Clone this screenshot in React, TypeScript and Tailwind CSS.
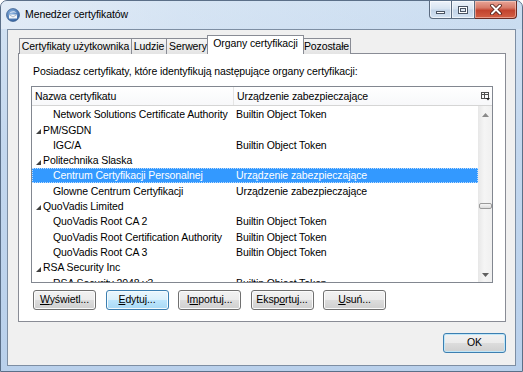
import React from "react";

type Row = { t: string; d?: string; lvl: 0 | 1; sel?: boolean };

const rows: Row[] = [
  { t: "Network Solutions Certificate Authority", d: "Builtin Object Token", lvl: 1 },
  { t: "PM/SGDN", lvl: 0 },
  { t: "IGC/A", d: "Builtin Object Token", lvl: 1 },
  { t: "Politechnika Slaska", lvl: 0 },
  { t: "Centrum Certyfikacji Personalnej", d: "Urządzenie zabezpieczające", lvl: 1, sel: true },
  { t: "Glowne Centrum Certyfikacji", d: "Urządzenie zabezpieczające", lvl: 1 },
  { t: "QuoVadis Limited", lvl: 0 },
  { t: "QuoVadis Root CA 2", d: "Builtin Object Token", lvl: 1 },
  { t: "QuoVadis Root Certification Authority", d: "Builtin Object Token", lvl: 1 },
  { t: "QuoVadis Root CA 3", d: "Builtin Object Token", lvl: 1 },
  { t: "RSA Security Inc", lvl: 0 },
  { t: "RSA Security 2048 v3", d: "Builtin Object Token", lvl: 1 },
];

const btnBase =
  "h-[20px] w-[63px] rounded-[3px] border flex items-center justify-center text-black";
const btnNormal =
  "border-[#707070] bg-[linear-gradient(#f2f2f2_0%,#ebebeb_50%,#dddddd_50%,#cfcfcf_100%)] shadow-[inset_0_0_0_1px_#fbfbfb]";
const btnHot =
  "border-[#3c7fb1] bg-[linear-gradient(#eaf6fd_0%,#d9f0fc_50%,#bee6fd_50%,#a7d9f5_100%)] shadow-[inset_0_0_0_1px_#f4fbfe]";

function Btn({ pre, u, post, hot }: { pre?: string; u: string; post: string; hot?: boolean }) {
  return (
    <div className={`${btnBase} ${hot ? btnHot : btnNormal}`}>
      <span>
        {pre}
        <span className="underline underline-offset-[1px]">{u}</span>
        {post}
      </span>
    </div>
  );
}

function Tri() {
  return (
    <svg width="5" height="5" viewBox="0 0 5 5" className="mr-[2px] mt-[2px]">
      <polygon points="5,0 5,5 0,5" fill="#404040" />
    </svg>
  );
}

function AppIcon() {
  return (
    <svg width="14" height="14" viewBox="0 0 14 14">
      <defs>
        <radialGradient id="g1" cx="0.4" cy="0.35" r="0.7">
          <stop offset="0" stopColor="#8fb6e2" />
          <stop offset="1" stopColor="#2f5f9e" />
        </radialGradient>
      </defs>
      <circle cx="7" cy="7" r="6.5" fill="url(#g1)" stroke="#2a4f80" strokeWidth="0.6" />
      <path d="M3 6.5 L11 6.5 L11 10.5 L3 10.5 Z" fill="#f4f6f8" />
      <path d="M3 6.5 L7 9 L11 6.5" fill="none" stroke="#8aa0bb" strokeWidth="0.7" />
      <path d="M3.5 5.5 C5 2.5 9 2.5 10.5 5 C8.5 4 6 4.2 3.5 5.5 Z" fill="#dfe8f2" />
    </svg>
  );
}

export default function App() {
  return (
    <div className="w-[523px] h-[372px] overflow-hidden font-['Liberation_Sans',Arial,sans-serif] text-[10.5px] tracking-[-0.1px] text-black">
      <div className="w-[523px] h-[372px] flex flex-col rounded-t-[7px] border border-[#5b6f88] bg-[linear-gradient(180deg,#d4e3f3_0%,#c3d7ee_40%,#b9d0eb_100%)]">
        {/* Title bar */}
        <div className="relative h-[28px] flex items-center pl-[5px] bg-[linear-gradient(90deg,rgba(236,242,249,0.6)_0%,rgba(220,232,245,0.3)_35%,rgba(170,200,232,0.2)_100%)] rounded-t-[6px]">
          <AppIcon />
          <span className="ml-[5px] text-[10.5px]">Menedżer certyfikatów</span>
          <div className="absolute right-[5px] top-0 flex h-[18px]">
            <div className="w-[23px] h-[18px] rounded-bl-[4px] border border-t-0 border-[#5b6b80] bg-[linear-gradient(#eef3fa_0%,#d8e4f1_45%,#c3d4e8_55%,#d3e2f3_100%)] shadow-[inset_0_0_0_1px_rgba(255,255,255,0.6)] flex items-end justify-center pb-[4px]">
              <div className="w-[9px] h-[3px] bg-white border border-[#4a5464]" />
            </div>
            <div className="w-[23px] h-[18px] border border-l-0 border-t-0 border-[#5b6b80] bg-[linear-gradient(#eef3fa_0%,#d8e4f1_45%,#c3d4e8_55%,#d3e2f3_100%)] shadow-[inset_0_0_0_1px_rgba(255,255,255,0.6)] flex items-center justify-center">
              <div className="w-[10px] h-[8px] border border-[#4a5464] bg-white flex items-center justify-center">
                <div className="w-[6px] h-[4px] border border-[#4a5464] bg-[#dfe8f3]" />
              </div>
            </div>
            <div className="w-[42px] h-[18px] rounded-br-[4px] border border-l-0 border-t-0 border-[#6b2a22] bg-[linear-gradient(#e8a597_0%,#d77a68_40%,#c2432e_55%,#d35f45_100%)] shadow-[inset_0_0_0_1px_rgba(255,220,210,0.5)] flex items-center justify-center">
              <svg width="14" height="11" viewBox="0 0 14 11">
                <path d="M3 1.5 L11 9.5 M11 1.5 L3 9.5" stroke="#4a1a14" strokeWidth="3.6" strokeLinecap="round" />
                <path d="M3 1.5 L11 9.5 M11 1.5 L3 9.5" stroke="#ffffff" strokeWidth="2" strokeLinecap="round" />
              </svg>
            </div>
          </div>
        </div>

        {/* Client area */}
        <div className="flex-1 ml-[6px] mr-[6px] mb-[5px] border border-[#7d8ea3] bg-[#f0f0f0] flex flex-col pt-[6px]">
          {/* Tabs */}
          <div className="relative z-10 flex items-end ml-[11px] h-[18px] -mb-[1px]">
            <div className="w-[113px] h-[16px] border border-b-0 border-[#898c95] bg-[linear-gradient(#f5f5f5,#e4e4e4)] flex items-center justify-center">
              Certyfikaty użytkownika
            </div>
            <div className="-ml-[1px] w-[36px] h-[16px] border border-b-0 border-[#898c95] bg-[linear-gradient(#f5f5f5,#e4e4e4)] flex items-center justify-center">
              Ludzie
            </div>
            <div className="-ml-[1px] w-[44px] h-[16px] border border-b-0 border-[#898c95] bg-[linear-gradient(#f5f5f5,#e4e4e4)] flex items-center justify-center">
              Serwery
            </div>
            <div className="relative z-20 -ml-[3px] w-[97px] h-[19px] border border-b-0 border-[#898c95] bg-white flex items-center justify-center pb-[2px]">
              Organy certyfikacji
            </div>
            <div className="-ml-[2px] w-[49px] h-[16px] border border-b-0 border-[#898c95] bg-[linear-gradient(#f5f5f5,#e4e4e4)] flex items-center justify-center">
              Pozostałe
            </div>
          </div>

          {/* Panel */}
          <div className="ml-[10px] mr-[9px] h-[269px] border border-[#898c95] bg-white flex flex-col pl-[12px] pt-[10px]">
            <div className="h-[14px] flex items-center pl-[2px] pt-[1px]">
              Posiadasz certyfikaty, które identyfikują następujące organy certyfikacji:
            </div>

            {/* Tree list */}
            <div className="mt-[8px] w-[462px] h-[197px] border border-[#828790] bg-white flex flex-col overflow-hidden">
              <div className="h-[19px] shrink-0 flex border-b border-[#d5d5d5] bg-[linear-gradient(#ffffff,#f7f8fa)]">
                <div className="w-[202px] border-r border-[#e5e5e5] pl-[3px] pt-[1px] flex items-center">
                  Nazwa certyfikatu
                </div>
                <div className="w-[244px] pl-[3px] pt-[1px] flex items-center">Urządzenie zabezpieczające</div>
                <div className="w-[14px] flex items-center justify-center">
                  <svg width="9" height="9" viewBox="0 0 9 9">
                    <rect x="0.5" y="0.5" width="7" height="6" fill="none" stroke="#505050" />
                    <line x1="0.5" y1="2.5" x2="7.5" y2="2.5" stroke="#505050" />
                    <line x1="3.5" y1="0.5" x2="3.5" y2="6.5" stroke="#505050" />
                    <polygon points="5,6 9,6 7,8.5" fill="#202020" />
                  </svg>
                </div>
              </div>
              <div className="flex-1 flex overflow-hidden">
                <div className="w-[446px] flex flex-col overflow-hidden pt-[1px]">
                  {rows.map((r, i) => (
                    <div
                      key={i}
                      className={`h-[15.3px] shrink-0 flex items-center pt-[1px] ${
                        r.sel
                          ? "bg-[#3399ff] text-white outline-1 outline-dotted outline-[#bcdcff] -outline-offset-1"
                          : ""
                      }`}
                    >
                      <div className={`w-[202px] flex items-center ${r.lvl === 0 ? "pl-[4px]" : "pl-[21px]"}`}>
                        {r.lvl === 0 && <Tri />}
                        <span className="whitespace-nowrap">{r.t}</span>
                      </div>
                      <div className="pl-[2px] whitespace-nowrap">{r.d ?? ""}</div>
                    </div>
                  ))}
                </div>
                {/* Scrollbar */}
                <div className="w-[14px] flex flex-col bg-[linear-gradient(90deg,#e9e9e9,#f5f5f5_40%,#f0f0f0)] border-l border-[#e8e8e8]">
                  <div className="h-[17px] flex items-center justify-center">
                    <svg width="7" height="4" viewBox="0 0 7 4">
                      <polygon points="0,4 7,4 3.5,0" fill="#8a8a8a" />
                    </svg>
                  </div>
                  <div className="flex-1 relative">
                    <div className="mt-[80px] h-[6px] w-[13px] rounded-[2px] border border-[#9a9a9a] bg-[linear-gradient(#f6f6f6,#dcdcdc)]" />
                  </div>
                  <div className="h-[17px] flex items-center justify-center pt-[3px]">
                    <svg width="7" height="4" viewBox="0 0 7 4">
                      <polygon points="0,0 7,0 3.5,4" fill="#606060" />
                    </svg>
                  </div>
                </div>
              </div>
            </div>

            {/* Buttons */}
            <div className="mt-[7px] ml-[2px] flex gap-[9.5px]">
              <Btn u="W" post="yświetl..." />
              <Btn u="E" post="dytuj..." hot />
              <Btn pre="I" u="m" post="portuj..." />
              <Btn pre="Eksp" u="o" post="rtuj..." />
              <Btn u="U" post="suń..." />
            </div>
          </div>

          {/* OK */}
          <div className="flex justify-end mr-[9px] mt-[11px]">
            <div className="h-[20px] w-[63px] rounded-[3px] border border-[#3c7fb1] bg-[linear-gradient(#f2f2f2_0%,#ebebeb_50%,#dddddd_50%,#cfcfcf_100%)] shadow-[inset_0_0_0_1px_#bfe6f8] flex items-center justify-center">
              OK
            </div>
          </div>
        </div>
      </div>
    </div>
  );
}
